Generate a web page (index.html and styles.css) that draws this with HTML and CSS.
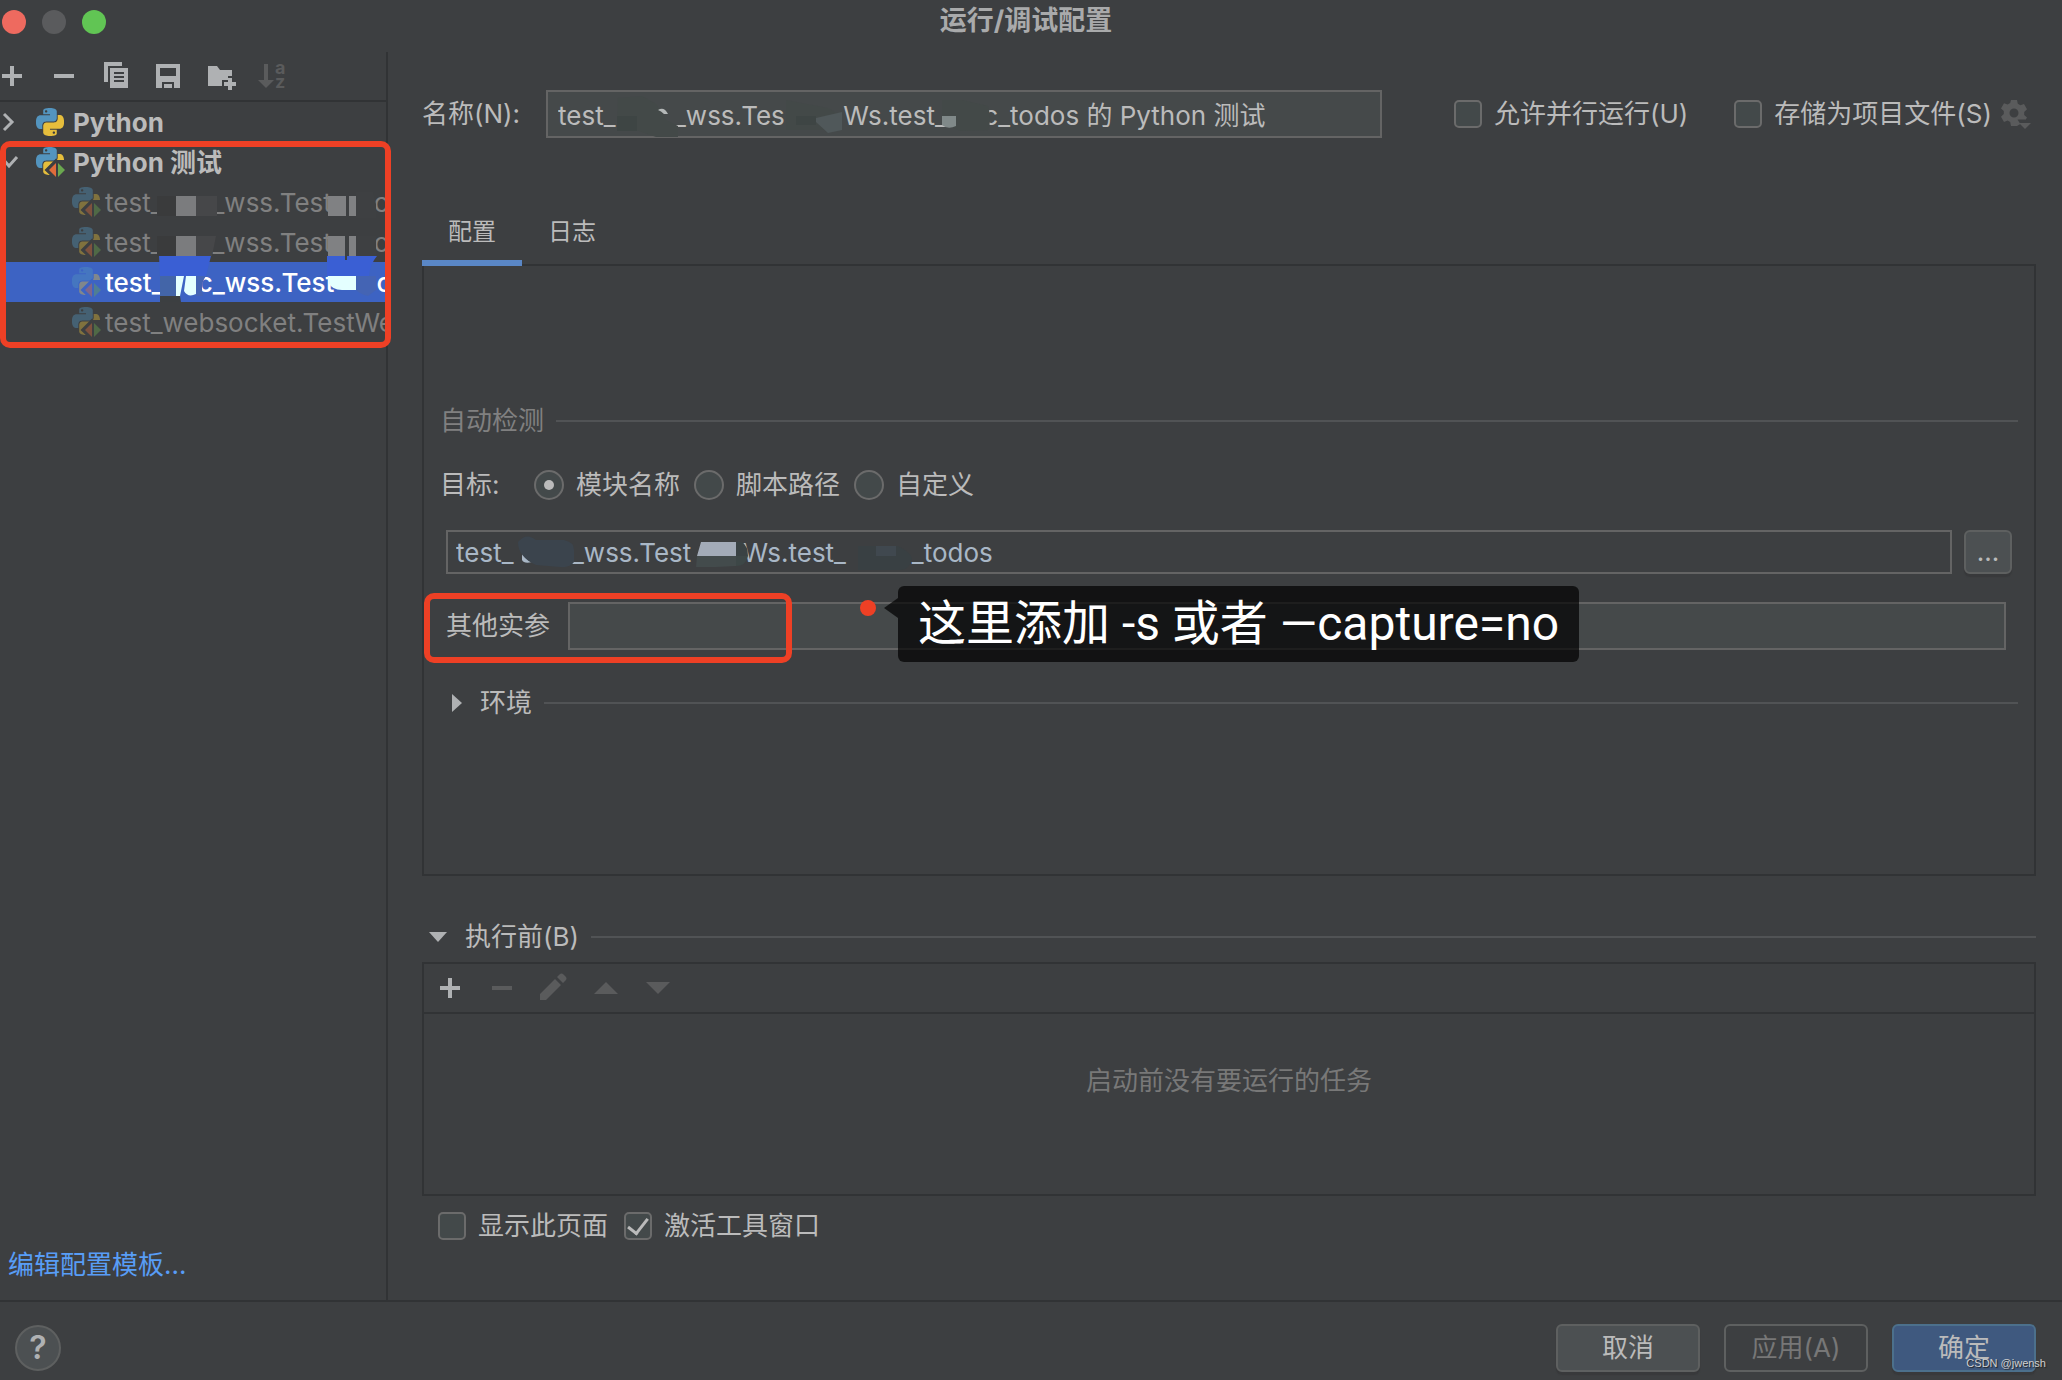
FILE: index.html
```html
<!DOCTYPE html>
<html lang="zh-CN">
<head>
<meta charset="utf-8">
<title>运行/调试配置</title>
<link rel="stylesheet" href="styles.css">
</head>
<body>
<svg class="defs" aria-hidden="true">
  <defs>
    <path id="snake" d="M14.25.18l.9.2.73.26.59.3.45.32.34.34.25.34.16.33.1.3.04.26.02.2-.01.13V8.5l-.05.63-.13.55-.21.46-.26.38-.3.31-.33.25-.35.19-.35.14-.33.1-.3.07-.26.04-.21.02H8.77l-.69.05-.59.14-.5.22-.41.27-.33.32-.27.35-.2.36-.15.37-.1.35-.07.32-.04.27-.02.21v3.06H3.17l-.21-.03-.28-.07-.32-.12-.35-.18-.36-.26-.36-.36-.35-.46-.32-.59-.28-.73-.21-.88-.14-1.05-.05-1.23.06-1.22.16-1.04.24-.87.32-.71.36-.57.4-.44.42-.33.42-.24.4-.16.36-.1.32-.05.24-.01h.16l.06.01h8.16v-.83H6.18l-.01-2.75-.02-.37.05-.34.11-.31.17-.28.25-.26.31-.23.38-.2.44-.18.51-.15.58-.12.64-.1.71-.06.77-.04.84-.02 1.27.05zm-6.3 1.98l-.23.33-.08.41.08.41.23.34.33.22.41.09.41-.09.33-.22.23-.34.08-.41-.08-.41-.23-.33-.33-.22-.41-.09-.41.09z"/>
    <symbol id="python" viewBox="0 0 24 24">
      <use href="#snake" fill="#5394be"/>
      <use href="#snake" fill="#e6be3c" transform="rotate(180 12 12)"/>
    </symbol>
    <mask id="test-cut">
      <rect width="30" height="30" fill="#fff"/>
      <path d="M20 11.500 L8.500 23 L18 32 H32 V13 H20Z" fill="#000"/>
    </mask>
    <symbol id="pytest" viewBox="0 0 30 30">
      <g mask="url(#test-cut)">
        <svg width="28" height="28" viewBox="0 0 24 24">
          <use href="#snake" fill="#5394be"/>
          <use href="#snake" fill="#e6be3c" transform="rotate(180 12 12)"/>
        </svg>
      </g>
      <path d="M20 16v14l-7-7z" fill="#e06c3b"/>
      <path d="M22 16v14l7-7z" fill="#6aa84f"/>
    </symbol>
    <symbol id="plus" viewBox="0 0 24 28"><path d="M10 4h4v8h8v4h-8v8h-4v-8H2v-4h8z" fill="currentColor"/></symbol>
    <symbol id="minus" viewBox="0 0 24 28"><path d="M2 12h20v4H2z" fill="currentColor"/></symbol>
  </defs>
</svg>

<header class="titlebar">
  <div class="lights">
    <button class="light light-close" aria-label="关闭"></button>
    <button class="light light-min" aria-label="最小化"></button>
    <button class="light light-max" aria-label="缩放"></button>
  </div>
  <h1>运行/调试配置</h1>
</header>

<div class="workspace">
  <aside class="sidebar">
    <div class="toolbar">
      <button aria-label="添加"><svg><use href="#plus"/></svg></button>
      <button aria-label="移除"><svg><use href="#minus"/></svg></button>
      <button aria-label="复制"><svg viewBox="0 0 24 28"><path fill="currentColor" fill-rule="evenodd" d="M0 0h18v4H4v16H0zM6 6h18v20H6zM10 10v2h10v-2zM10 14v2h10v-2zM10 18v2h10v-2z"/></svg></button>
      <button aria-label="保存"><svg viewBox="0 0 24 28"><path fill="currentColor" fill-rule="evenodd" d="M0 2h24v24h-6v-6H6v6H0zM4 6v8h16V6z"/><path fill="currentColor" d="M8 22h8v4H8z"/></svg></button>
      <button aria-label="新建文件夹"><svg viewBox="0 0 24 28"><path fill="currentColor" d="M0 4h9l3 4h12v6h-4v4h-6v6H0z"/><path fill="currentColor" d="M20 16h4v4h4v4h-4v4h-4v-4h-4v-4h4z"/></svg></button>
      <button aria-label="排序" disabled><svg viewBox="0 0 24 28"><path fill="currentColor" d="M4 2h4v16h6l-8 8-8-8h6z"/><text x="15" y="12" class="sort-text">a</text><text x="15" y="26" class="sort-text">z</text></svg></button>
    </div>
    <div class="tree-wrap">
      <ul class="tree">
        <li class="group"><svg class="chevron" viewBox="0 0 18 20"><path d="M4 2l8 8-8 8"/></svg><svg class="logo"><use href="#python"/></svg><span>Python</span></li>
        <li class="group"><svg class="chevron" viewBox="0 0 18 20"><path d="M2 6l7 8 8-9"/></svg><svg class="logo logo-test"><use href="#pytest"/></svg><span>Python 测试</span></li>
        <li class="leaf"><svg class="logo logo-test"><use href="#pytest"/></svg><span>test_<i class="gap-a"></i>_wss.Test<i class="gap-b"></i>cWs</span></li>
        <li class="leaf"><svg class="logo logo-test"><use href="#pytest"/></svg><span>test_<i class="gap-a"></i>_wss.Test<i class="gap-b"></i>oWs</span></li>
        <li class="leaf selected"><svg class="logo logo-test"><use href="#pytest"/></svg><span>test_<i class="gap-c"></i>c_wss.Test<i class="gap-b"></i>oWs</span></li>
        <li class="leaf"><svg class="logo logo-test"><use href="#pytest"/></svg><span>test_websocket.TestWebSocket</span></li>
      </ul>
      <svg class="smudge" viewBox="0 0 386 240" aria-hidden="true">
        <path fill="#3a3b3c" d="M157 94h19v20h-19zM157 134h19v20h-19z"/>
        <path fill="#7b7c7e" d="M176 94h20v20h-20zM176 134h20v20h-20z"/>
        <path fill="#464749" d="M196 94h21v20h-21zM196 134h20l-4 20h-16z"/>
        <path fill="#808183" d="M328 94h18v20h-18zM349 94h7v20h-7zM328 134h17v20h-17zM349 134h7v20h-7z"/>
        <path fill="#3e4042" d="M356 90h17l3 12v14h-20zM356 134h20v20h-20z"/>
        <path fill="#3a5fd4" d="M159 154h52l-5 20h-46zM327 154h50q-7 8-8 20h-42z"/>
        <path fill="#4365a8" d="M160 174h16v20h-16z"/>
        <path fill="#3c3f41" d="M160 194h20l1 6h-21zM345 134l2 0v24h-2z"/>
        <path fill="#e4ffff" d="M176 174h8l-4 20h-4zM186 174h10v18q-8 4-12-3z"/>
        <path fill="#4464b4" d="M196 174h10q-6 8-3 20h-7zM356 174h20v14l-8 6q-8-2-12-6z"/>
        <path fill="#e4ffff" d="M328 174h28v14h-14q-10 0-14-8z"/>
      </svg>
      <div class="redbox redbox-tree"></div>
    </div>
    <a class="template-link" href="#">编辑配置模板...</a>
  </aside>

  <main class="content">
    <div class="name-row">
      <label for="name">名称(N):</label>
      <div class="name-field">
        <input class="field" id="name" type="text" value="test_&nbsp;&nbsp;&nbsp;&nbsp;&nbsp;&nbsp;&nbsp;&nbsp;_wss.Tes&nbsp;&nbsp;&nbsp;&nbsp;&nbsp;&nbsp;&nbsp;&nbsp;Ws.test_&nbsp;&nbsp;&nbsp;&nbsp;&nbsp;c_todos 的 Python 测试">
        <svg class="smudge" viewBox="0 0 836 48" aria-hidden="true">
          <path fill="#434948" d="M72 8l24-2 14 8 10 16 12 6v11h-22l-20-7H71z"/>
          <path fill="#3e4544" d="M71 26h20v15H71zM250 26h20v9h-20z"/>
          <path fill="#434948" d="M240 10l42 8 14 8-2 14H240z" opacity=".6"/>
          <path fill="#3e4544" d="M250 26h20v9h-20z"/>
          <path fill="#50585a" d="M270 28l26-6v18l-14 3-12-11z"/>
          <path fill="#b4b8b8" d="M112 20q6-4 10 4h-4q-3-3-6-4z"/>
          <path fill="#434948" d="M396 10h20l26 6q4 14 0 24l-28 1-18-8z"/>
          <path fill="#808989" d="M396 26h14v10q-8 4-14-1z"/>
        </svg>
      </div>
      <label class="check check-parallel"><input type="checkbox">允许并行运行(U)</label>
      <label class="check"><input type="checkbox">存储为项目文件(S)</label>
      <button class="gear" aria-label="设置" disabled><svg viewBox="0 0 28 28">
        <path fill="currentColor" fill-rule="evenodd" d="M9 0h6l.8 3.800 2.600 1.500L22 4.100l3 5.200-2.800 2.600v3L25 17.500 23.800 19.500H15.500l2.800 4.500L15 26H9l-.8-3.900-2.600-1.500L2 21.900l-3-5.200 2.800-2.600v-3L-1 8.500l3-5.200 3.600 1.200 2.600-1.500zM12 8.500a4.500 4.500 0 1 0 0 9 4.500 4.500 0 0 0 0-9z"/>
        <path fill="currentColor" d="M17 23h12l-6 6z"/></svg></button>
    </div>

    <div class="tabs" role="tablist">
      <button class="tab active" role="tab" aria-selected="true">配置</button>
      <button class="tab" role="tab" aria-selected="false">日志</button>
    </div>

    <section class="config">
      <h2 class="section-title muted">自动检测</h2>
      <div class="target-row" role="radiogroup" aria-labelledby="target-label">
        <span id="target-label">目标:</span>
        <label class="radio"><input type="radio" name="target" checked>模块名称</label>
        <label class="radio"><input type="radio" name="target">脚本路径</label>
        <label class="radio"><input type="radio" name="target">自定义</label>
      </div>
      <div class="module-row">
        <div class="module-field">
          <input class="field plain" type="text" aria-label="模块名称" value="test_&nbsp;&nbsp;&nbsp;&nbsp;&nbsp;&nbsp;&nbsp;&nbsp;_wss.Test&nbsp;&nbsp;&nbsp;&nbsp;&nbsp;&nbsp;&nbsp;Ws.test_&nbsp;&nbsp;&nbsp;&nbsp;&nbsp;&nbsp;&nbsp;&nbsp;&nbsp;_todos">
          <svg class="smudge" viewBox="0 0 1506 44" aria-hidden="true">
            <path fill="#a9b7c6" d="M76 22l6 8 4 2q-8 2-10-2z"/>
            <path fill="#3b444d" d="M72 12q8-10 18-2l28 0q10 2 10 10v12q-4 6-14 5l-24-2q-18-8-18-23z"/>
            <path fill="#a3abb8" d="M251 26l4-14h17v14zM272 12h18v14h-18z"/>
            <path fill="#3a4244" d="M290 12h6q6 4 6 14h-12z"/>
            <path fill="#434b4c" d="M251 26h39v10l-20 1h-20z"/>
            <path fill="#3d4747" d="M290 26h12q-2 10-12 10z"/>
            <path fill="#394043" d="M412 16h40q12 6 14 12-2 12-12 12h-42z"/>
            <path fill="#40484f" d="M430 16h20v10h-20z"/>
          </svg>
        </div>
        <button class="btn browse" aria-label="浏览">...</button>
      </div>
      <div class="args-row">
        <label for="args">其他实参</label>
        <input class="field" id="args" type="text">
        <div class="redbox redbox-args"></div>
        <span class="pin"></span>
        <div class="callout">这里添加 -s 或者 —capture=no</div>
      </div>
      <h2 class="section-title env"><button class="fold"><svg class="tri-right" viewBox="0 0 10 18"><path fill="currentColor" d="M0 0l10 9-10 9z"/></svg>环境</button></h2>
    </section>

    <h2 class="section-title before"><button class="fold"><svg class="tri-down" viewBox="0 0 18 10"><path fill="currentColor" d="M0 0h18l-9 10z"/></svg>执行前(B)</button></h2>
    <section class="tasks">
      <div class="toolbar task-tools">
        <button aria-label="添加任务"><svg><use href="#plus"/></svg></button>
        <button aria-label="移除任务" disabled><svg><use href="#minus"/></svg></button>
        <button aria-label="编辑任务" disabled><svg viewBox="0 0 24 28"><path fill="currentColor" d="M-2 20L13 5l6 6L4 26h-6zM15 3l2.500-2.500q2-2 4 0l2 2q2 2 0 4L21 9z"/></svg></button>
        <button aria-label="上移" disabled><svg viewBox="0 0 24 28"><path fill="currentColor" d="M0 20L12 8l12 12z"/></svg></button>
        <button aria-label="下移" disabled><svg viewBox="0 0 24 28"><path fill="currentColor" d="M0 8h24L12 20z"/></svg></button>
      </div>
      <p class="empty">启动前没有要运行的任务</p>
    </section>
    <div class="options">
      <label class="check"><input type="checkbox">显示此页面</label>
      <label class="check"><input type="checkbox" checked>激活工具窗口</label>
    </div>
  </main>
</div>

<footer class="footer">
  <button class="help" aria-label="帮助">?</button>
  <div class="actions">
    <button class="btn">取消</button>
    <button class="btn btn-disabled" disabled>应用(A)</button>
    <button class="btn btn-primary">确定</button>
  </div>
  <span class="watermark">CSDN @jwensh</span>
</footer>
</body>
</html>
```
FILE: styles.css
```css
* { box-sizing: border-box; }

:root {
  --bg: #3d3f41;
  --line: #313335;
  --rule: #515355;
  --border: #646464;
  --field: #45494a;
  --text: #bbbbbb;
  --icon: #afb1b3;
  --off: #5a5b5c;
  --red: #ee4025;
}

body {
  margin: 0;
  min-height: 100vh;
  display: flex;
  flex-direction: column;
  background: var(--bg);
  color: var(--text);
  font: 26px/38px Inter, "Noto Sans CJK SC", sans-serif;
}

button, input {
  font: inherit;
  color: inherit;
  margin: 0;
}

button {
  padding: 0;
  border: 0;
  background: none;
}

h1, h2, p, ul { margin: 0; padding: 0; }

svg { display: block; overflow: visible; }

.defs { position: absolute; width: 0; height: 0; }

/* title bar */
.titlebar {
  display: grid;
  grid-template-columns: 1fr auto 1fr;
  height: 52px;
  padding: 2px 12px 0 2px;
}

.lights { display: flex; gap: 16px; padding-top: 8px; }
.light { width: 24px; height: 24px; border-radius: 50%; }
.light-close { background: #ee6a5f; }
.light-min { background: #5a5b5d; }
.light-max { background: #61c554; }

h1 { font-size: 27px; font-weight: 700; color: #a9aaab; }

/* layout */
.workspace { flex: 1; display: flex; }

.sidebar {
  flex: none;
  width: 388px;
  display: flex;
  flex-direction: column;
  border-right: 2px solid var(--line);
}

.toolbar {
  display: flex;
  align-items: center;
  gap: 28px;
  height: 50px;
  border-bottom: 2px solid var(--line);
  color: var(--icon);
}
.toolbar button { width: 24px; height: 28px; }
.toolbar svg { width: 24px; height: 28px; }
.toolbar button:disabled, .gear { color: var(--off); }
.sort-text { font: 700 18px Inter, sans-serif; fill: currentColor; }

/* configuration tree */
.tree-wrap { position: relative; }
.tree { list-style: none; overflow: hidden; }
.tree li {
  display: flex;
  align-items: center;
  height: 40px;
  white-space: nowrap;
}
.tree span { padding-top: 2px; }
.group { font-weight: 700; }
.chevron {
  width: 18px;
  height: 20px;
  margin-right: 18px;
  fill: none;
  stroke: var(--icon);
  stroke-width: 3;
}
.logo { flex: none; width: 28px; height: 28px; margin-right: 9px; }
.logo-test { width: 30px; height: 30px; margin-right: 7px; }
.leaf { padding-left: 72px; color: #808080; }
.leaf .logo { margin-right: 3px; opacity: .4; }
.leaf.selected { background: #3d63c3; color: #fff; font-weight: 500; }
.gap-a, .gap-b, .gap-c { display: inline-block; }
.gap-a { width: 50px; }
.gap-b { width: 42px; }
.gap-c { width: 34px; }

.smudge {
  position: absolute;
  top: 0;
  left: 0;
  height: 100%;
  pointer-events: none;
}

.redbox {
  position: absolute;
  border: 6px solid var(--red);
  border-radius: 10px;
  pointer-events: none;
}
.redbox-tree { inset: 39px -5px -6px 0; }
.redbox-args { left: -22px; top: -9px; width: 368px; height: 70px; }

.template-link {
  margin-top: auto;
  padding: 0 8px 16px;
  color: #589df6;
  text-decoration: none;
}

/* main column */
.content {
  flex: 1;
  min-width: 0;
  display: flex;
  flex-direction: column;
  padding: 38px 26px 60px 34px;
}

.name-row { display: flex; align-items: center; height: 48px; }
.name-row > label:first-child { width: 124px; flex: none; }
.name-field { position: relative; flex: 0 1 836px; }
.field {
  display: block;
  width: 100%;
  height: 48px;
  padding: 0 10px 2px;
  border: 2px solid var(--border);
  border-radius: 0;
  background: var(--field);
  outline: 0;
}

.check, .radio {
  display: flex;
  align-items: center;
  gap: 12px;
  white-space: nowrap;
}
.check input, .radio input {
  appearance: none;
  flex: none;
  display: grid;
  place-items: center;
  width: 28px;
  height: 28px;
  border: 2px solid #6b6b6b;
  border-radius: 5px;
  background: #43494a;
}
.check input:checked::before {
  content: "";
  width: 9px;
  height: 17px;
  border: solid var(--text);
  border-width: 0 3px 3px 0;
  transform: translateY(-2px) rotate(38deg);
}
.radio input { width: 30px; height: 30px; border-radius: 50%; }
.radio input:checked::before {
  content: "";
  width: 10px;
  height: 10px;
  border-radius: 50%;
  background: var(--text);
}
.check-parallel { margin: 0 46px 0 auto; }
.gear { width: 28px; height: 28px; margin: 0 6px 0 10px; }

.tabs { display: flex; margin-top: 68px; }
.tab {
  height: 60px;
  padding: 0 26px 2px;
  border-bottom: 6px solid transparent;
  font-size: 24px;
}
.tab.active { border-color: #5a87c6; position: relative; z-index: 1; }

.config {
  flex: 1;
  margin-top: -2px;
  padding: 136px 16px 24px;
  border: 2px solid var(--line);
}

.section-title {
  display: flex;
  align-items: center;
  gap: 12px;
  font-size: 26px;
  font-weight: 400;
}
.section-title::after { content: ""; flex: 1; height: 2px; background: var(--rule); }
.muted { color: #808080; }

.target-row { display: flex; align-items: center; height: 30px; margin-top: 30px; gap: 14px; }
.target-row > span { width: 80px; }

.module-row { display: flex; gap: 12px; margin: 30px 6px 0; }
.module-field { position: relative; flex: 1; }
.field.plain { height: 44px; padding: 0 8px; background: transparent; color: #a9b7c6; }

.args-row {
  position: relative;
  display: flex;
  align-items: center;
  gap: 18px;
  margin: 28px 12px 34px 6px;
}
.args-row label { flex: none; }
.args-row .field { flex: 1; }

.pin {
  position: absolute;
  left: 414px;
  top: -2px;
  width: 16px;
  height: 16px;
  border-radius: 50%;
  background: var(--red);
}
.callout {
  position: absolute;
  left: 452px;
  top: -16px;
  height: 76px;
  padding: 0 20px;
  border-radius: 6px;
  background: rgba(0, 0, 0, .7);
  color: #fff;
  font: 48px/76px Roboto, "Noto Sans CJK SC", sans-serif;
  white-space: nowrap;
}
.callout::before {
  content: "";
  position: absolute;
  left: -14px;
  top: 12px;
  border: solid transparent;
  border-width: 10px 14px 10px 0;
  border-right-color: rgba(0, 0, 0, .7);
}

.fold { display: flex; align-items: center; gap: 18px; }
.tri-right { width: 10px; height: 18px; color: var(--icon); }
.tri-down { width: 18px; height: 10px; color: var(--icon); }
.env { padding-left: 12px; }
.before { padding-left: 7px; margin-top: 42px; }

.tasks { margin-top: 6px; border: 2px solid var(--line); }
.task-tools { padding-left: 14px; }
.empty { height: 180px; padding-top: 48px; text-align: center; color: #787878; }

.options { display: flex; gap: 16px; height: 28px; margin-top: 16px; padding-left: 16px; }

/* footer */
.footer {
  position: relative;
  display: flex;
  align-items: center;
  justify-content: space-between;
  height: 80px;
  padding: 14px 26px 0 15px;
  border-top: 2px solid var(--line);
}
.help {
  width: 46px;
  height: 46px;
  border: 2px solid #5e6060;
  border-radius: 50%;
  background: #4c5052;
  color: var(--icon);
  font-size: 32px;
  font-weight: 600;
}
.actions { display: flex; gap: 24px; }
.btn {
  width: 144px;
  height: 48px;
  border: 2px solid #5e6060;
  border-radius: 6px;
  background: #4c5052;
  box-shadow: 0 3px 1px #38393b;
}
.browse { width: 48px; height: 44px; }
.btn-disabled { background: none; box-shadow: none; color: #777777; }
.btn-primary { border-color: #4c708c; background: #3f597f; }
.watermark {
  position: absolute;
  right: 16px;
  bottom: 8px;
  font: 11px/18px "Liberation Sans", sans-serif;
  color: #d0d0d0;
  text-shadow: 1px 1px 1px #222;
}
```
